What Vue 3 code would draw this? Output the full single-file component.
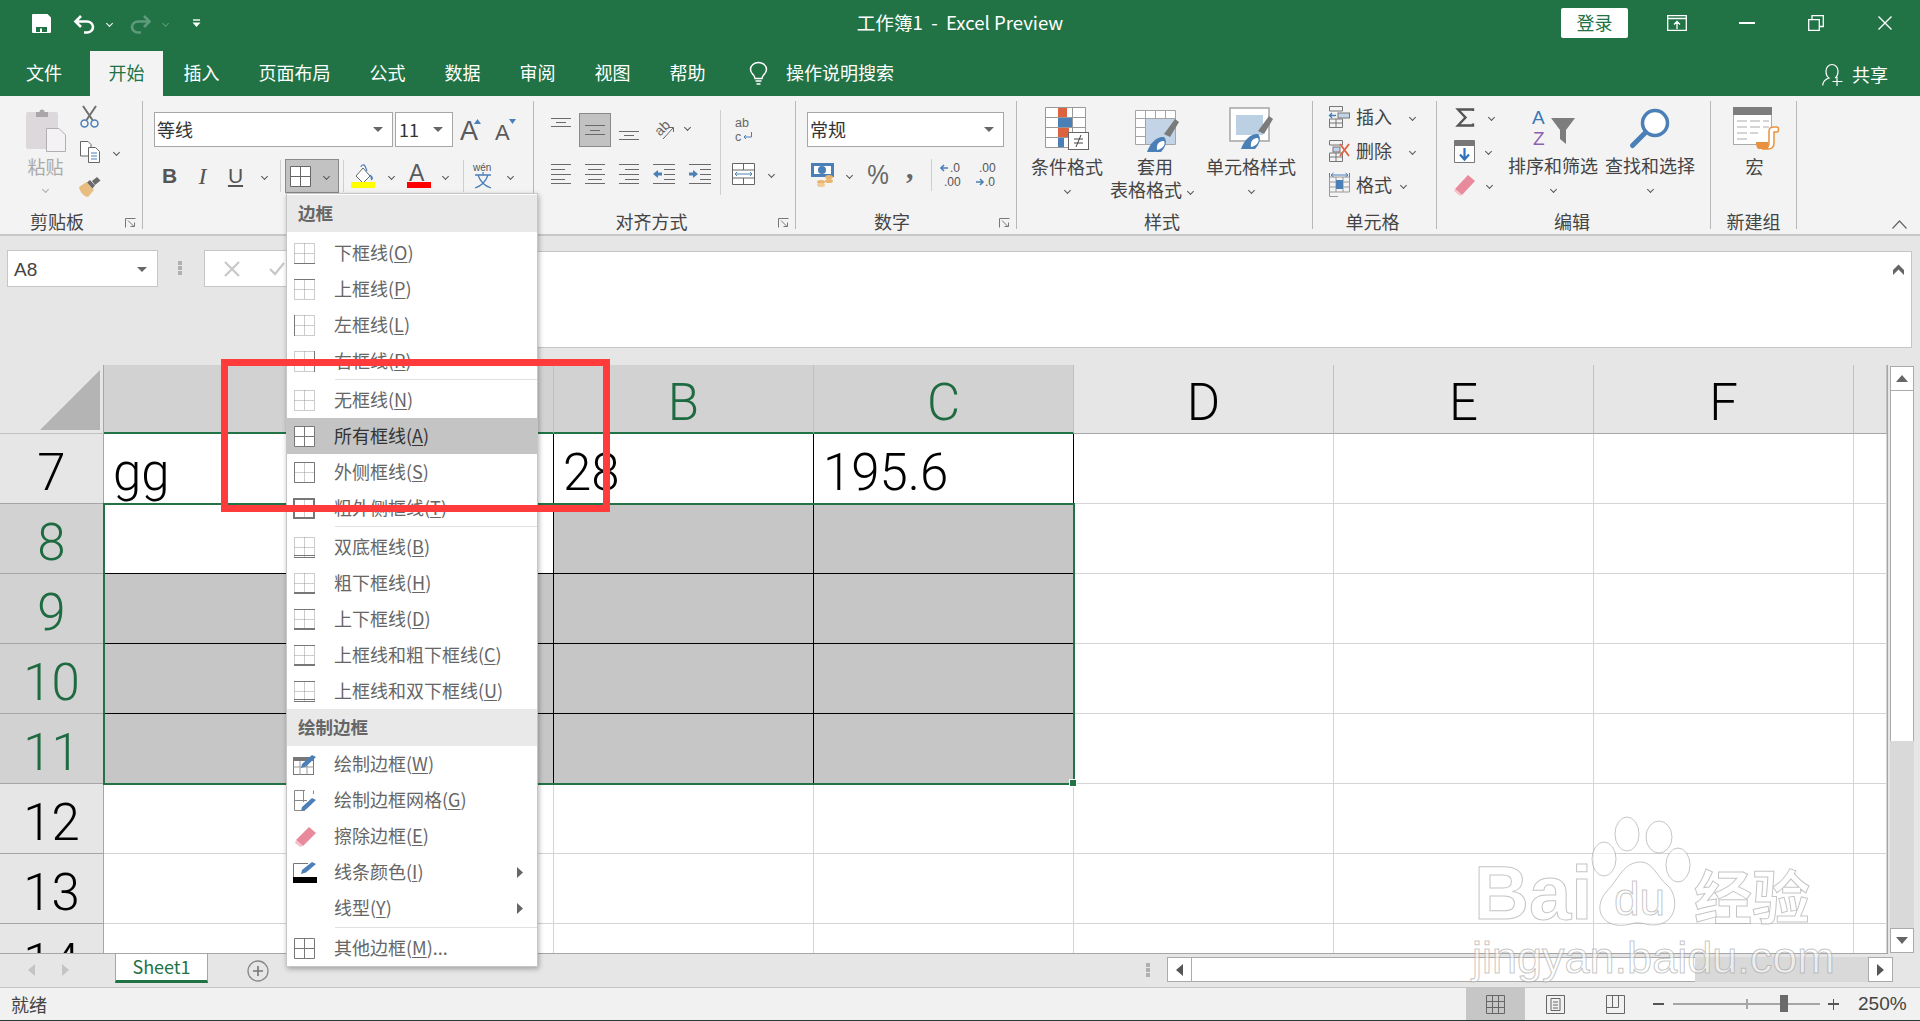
<template>
  <div class="app">
    <!-- title bar -->
    <div class="titlebar">
      <div class="qat">
        <svg class="save" viewBox="0 0 19 19"><path fill="#fff" fill-rule="evenodd" d="M1 0H15.5L19 3.5V18a1 1 0 0 1-1 1H1a1 1 0 0 1-1-1V1a1 1 0 0 1 1-1ZM4 13V18H8V14.5H10V18H15V13Z" /></svg>
        <svg class="undo" viewBox="0 0 23 19"><path d="M8 2 2.5 7.5 8 13M3 7.5H14a6 5.5 0 0 1 0 11H11" fill="none" stroke="#fff" stroke-width="2.6" /></svg>
        <span class="chev light c1"></span>
        <svg class="undo redo" viewBox="0 0 23 19"><path d="M15 2 20.5 7.5 15 13M20 7.5H9a6 5.5 0 0 0 0 11H12" fill="none" stroke="#5e9a7c" stroke-width="2.6" /></svg>
        <span class="chev light dim c2"></span>
        <svg class="cust" viewBox="0 0 9 9"><path d="M1 1H8" stroke="#fff" stroke-width="1.4" /><path d="M0.5 3.5H8.5L4.5 8Z" fill="#fff" /></svg>
      </div>
      <div class="doc-title">工作簿1&nbsp; -&nbsp; Excel Preview</div>
      <div class="win">
        <button class="login">登录</button>
        <svg class="w1" viewBox="0 0 20 16"><path d="M.7.7H19.3V15.3H.7ZM.7 3.5H19.3M10 14V7M7 9.5 10 6.5 13 9.5" fill="none" stroke="#fff" stroke-width="1.3" /></svg>
        <div class="w-min"></div>
        <svg class="w-res" viewBox="0 0 16 16"><path d="M.7 4.7H11.3V15.3H.7ZM4 4.5V.7H15.3V11.5H11.5" fill="none" stroke="#fff" stroke-width="1.3" /></svg>
        <svg class="w-close" viewBox="0 0 14 14"><path d="M.5.5 13.5 13.5M13.5.5.5 13.5" stroke="#fff" stroke-width="1.4" /></svg>
      </div>
    </div>

    <!-- tabs -->
    <div class="tabs">
      <span v-for="t in tabs" :key="t" class="tab" :class="{ on: t === '开始', file: t === '文件' }">{{ t }}</span>
      <svg class="bulb" viewBox="0 0 19 23"><path d="M6 16.5C6 13 1.5 12 1.5 7.5a8 7 0 0 1 16 0C17.500 12 13 13 13 16.500ZM6.500 19H12.500M7.500 22H11.500" fill="none" stroke="#fff" stroke-width="1.5" /></svg>
      <span class="search">操作说明搜索</span>
      <div class="share">
        <svg viewBox="0 0 21 22"><path d="M.7 21.500C1 16.500 4 15 7 14 4.500 12.500 4 9.500 4 7a6 6.500 0 0 1 12 0C16 9.500 15.500 12.500 13 14M15 13V22M10.500 17.500H20.500" fill="none" stroke="#fff" stroke-width="1.2" /></svg>
        <span>共享</span>
      </div>
    </div>

    <!-- ribbon -->
    <div class="ribbon">
      <section class="group" style="width: 143px">
        <div class="body clip">
          <div class="paste">
            <svg viewBox="0 0 40 45"><rect x="0" y="5" width="32" height="37" rx="2" fill="#dcd8dc" /><path d="M10 5h3.500a2.500 2.500 0 0 1 5 0H22v5H10Z" fill="#a9a6a9" /><path d="M20.500 21.500H33L39.500 28V44.500H20.500Z" fill="#f5f2f6" stroke="#b0aeb0" /></svg>
            <span class="muted">粘贴</span>
            <span class="chev faint"></span>
          </div>
          <div class="clip-tools">
            <svg class="scissors" viewBox="0 0 19 22"><path d="M3 0 12.500 14M16 0 6.500 14" stroke="#6f6f6f" stroke-width="2" /><circle cx="4.500" cy="17.500" r="3.500" fill="none" stroke="#4a7fb8" stroke-width="1.500" /><circle cx="14.500" cy="17.500" r="3.500" fill="none" stroke="#4a7fb8" stroke-width="1.500" /></svg>
            <div class="copy">
              <svg viewBox="0 0 20 22"><path d="M.5.5H8L11 3.500V15H.5Z" fill="#fff" stroke="#666" /><path d="M8.500 6.500H15.500L19.500 10.500V21.500H8.500Z" fill="#fff" stroke="#666" /><path d="M11 12H17M11 15H17M11 18H17" stroke="#4a7fb8" /></svg>
              <span class="chev"></span>
            </div>
            <svg class="brush" viewBox="0 0 23 20"><path d="M1 10 8.500 5 16 13 10 20C7 20 2 16 1 10Z" fill="#e7bd80" /><path d="M9 5.500 12 3 17 8.500 14.500 11.500ZM14 4 19 0 22.500 3.500 17 8Z" fill="#6b6b6b" /></svg>
          </div>
        </div>
        <div class="glabel gl-clip">剪贴板</div>
        <svg class="launch" viewBox="0 0 11 10"><path d="M.5 9.500V.5H10.500M3 2.500 9 8.500M5.500 8.500H9.500V4.500" fill="none" stroke="#777" /></svg>
      </section>

      <section class="group" style="width: 391px">
        <div class="body font-g">
          <div class="row1">
            <div class="combo fname"><span class="ctext">等线</span><span class="tri"></span></div>
            <div class="combo fsize"><span class="ctext">11</span><span class="tri"></span></div>
            <svg class="grow" viewBox="0 0 22 24"><text x="0" y="22" class="ico-a" font-size="27">A</text><path d="M14 6 17.500 1 21 6Z" fill="#4a7fb8" /></svg>
            <svg class="shrink" viewBox="0 0 22 24"><text x="0" y="22" class="ico-a" font-size="22">A</text><path d="M14 1H21L17.500 6Z" fill="#4a7fb8" /></svg>
          </div>
          <div class="row2">
            <span class="bi b">B</span>
            <span class="bi i">I</span>
            <span class="bi u">U</span>
            <span class="cw bw"><span class="chev"></span></span>
            <span class="vs"></span>
            <div class="border-btn">
              <svg viewBox="0 0 21 21"><path d="M.5.5H20.500V20.500H.5ZM10.500.5V20.500M.5 10.500H20.500" fill="#fff" stroke="#666" /></svg>
              <span class="chev"></span>
            </div>
            <span class="vs"></span>
            <div class="color-tool fill">
              <svg viewBox="0 0 24 24"><path d="M5 12 12 4 19 12 12 19Z" fill="#fff" stroke="#666" /><path d="M10 3C10 1 13 0 14 2L16 7" fill="none" stroke="#4a7fb8" stroke-width="1.200" /><path d="M19 11C22 12 22 16 20 16" fill="#4a7fb8" stroke="#4a7fb8" /><rect x="0" y="18" width="24" height="6" fill="#ff0" /></svg>
            </div>
            <span class="cw c2w"><span class="chev"></span></span>
            <div class="color-tool">
              <svg viewBox="0 0 24 24"><text x="2" y="17" class="ico-a" font-size="23">A</text><rect x="0" y="18" width="24" height="6" fill="#f00" /></svg>
            </div>
            <span class="cw c3w"><span class="chev"></span></span>
            <span class="vs"></span>
            <svg class="wen" viewBox="0 0 20 26"><text x="0" y="8" font-size="10" fill="#555" font-family="Liberation Sans, sans-serif">wén</text><path d="M10 9V11.500M2 12H18M5 12C7 18 12 23 18 25M15 12C13 18 8 23 2 25" fill="none" stroke="#4a7fb8" stroke-width="1.300" /></svg>
            <span class="cw c4w"><span class="chev"></span></span>
          </div>
        </div>
      </section>

      <section class="group" style="width: 262px">
        <div class="body align-g">
          <div class="align-left">
            <div class="a-row first">
              <svg class="al" viewBox="0 0 20 34"><path d="M0 5.500H20M5 9.500H15M0 13.500H20" stroke="#6a6a6a" /></svg>
              <div class="al-on"><svg class="al" viewBox="0 0 20 34"><path d="M0 12.500H20M5 17.500H15M0 21.500H20" stroke="#6a6a6a" /></svg></div>
              <svg class="al" viewBox="0 0 20 34"><path d="M0 18.500H20M5 22.500H15M0 26.500H20" stroke="#6a6a6a" /></svg>
              <svg class="orient" viewBox="0 0 21 34"><text x="1" y="20" font-size="14" fill="#666" font-family="Liberation Sans, sans-serif" transform="rotate(-45 8 16)">ab</text><path d="M9 26 19 15M15 14.500H19.500V19" fill="none" stroke="#666" /></svg>
              <span class="cw o"><span class="chev"></span></span>
            </div>
            <div class="a-row second">
              <svg class="al2" viewBox="0 0 20 22"><path d="M0 1.500H20M0 6.500H14M0 11.500H20M0 16.500H14M0 20.500H20" stroke="#6a6a6a" /></svg>
              <svg class="al2" viewBox="0 0 20 22"><path d="M0 1.500H20M3 6.500H17M0 11.500H20M3 16.500H17M0 20.500H20" stroke="#6a6a6a" /></svg>
              <svg class="al2" viewBox="0 0 20 22"><path d="M0 1.500H20M6 6.500H20M0 11.500H20M6 16.500H20M0 20.500H20" stroke="#6a6a6a" /></svg>
              <svg class="al2 ind" viewBox="0 0 22 22"><path d="M0 1.500H22M11 6.500H22M11 11.500H22M11 16.500H22M0 20.500H22" stroke="#6a6a6a" /><path d="M0 11 5 7V9.500H9V12.500H5V15Z" fill="#4a7fb8" /></svg>
              <svg class="al2 ind" viewBox="0 0 22 22"><path d="M0 1.500H22M11 6.500H22M11 11.500H22M11 16.500H22M0 20.500H22" stroke="#6a6a6a" /><path d="M9 11 4 7V9.500H0V12.500H4V15Z" fill="#4a7fb8" /></svg>
            </div>
          </div>
          <span class="tall-sep"></span>
          <div class="align-right">
            <svg class="wrap" viewBox="0 0 18 24"><text x="0" y="10" font-size="12.500" fill="#666" font-family="Liberation Sans, sans-serif">ab</text><text x="0" y="24" font-size="12.500" fill="#666" font-family="Liberation Sans, sans-serif">c</text><path d="M16.500 15V20H9M11 18 9 20 11 22" fill="none" stroke="#4a7fb8" /></svg>
            <div class="merge">
              <svg viewBox="0 0 23 22"><path d="M.5.5H22.500V21.500H.5ZM.5 7H22.500M.5 15H22.500M11.500.5V7M11.500 15V21.500" fill="#fff" stroke="#666" /><path d="M3 11H20M5 9 3 11 5 13M18 9 20 11 18 13" fill="none" stroke="#4a7fb8" /></svg>
              <span class="chev"></span>
            </div>
          </div>
        </div>
        <div class="glabel gl-align">对齐方式</div>
        <svg class="launch" viewBox="0 0 11 10"><path d="M.5 9.500V.5H10.500M3 2.500 9 8.500M5.500 8.500H9.500V4.500" fill="none" stroke="#777" /></svg>
      </section>

      <section class="group" style="width: 221px">
        <div class="body num-g">
          <div class="combo nfmt"><span class="ctext">常规</span><span class="tri"></span></div>
          <div class="num-row">
            <svg class="cur" viewBox="0 0 23 24"><rect width="23" height="14" fill="#4a7fb8" /><rect x="3" y="3" width="17" height="8" fill="#fff" /><circle cx="11" cy="7" r="4" fill="#4a7fb8" /><ellipse cx="18" cy="14" rx="4" ry="2" fill="#e8b46e" /><ellipse cx="18" cy="18" rx="4" ry="2" fill="#e8b46e" /><ellipse cx="10" cy="19" rx="4" ry="2" fill="#e8b46e" /><ellipse cx="10" cy="22" rx="4" ry="2" fill="#f1cc99" /></svg>
            <span class="cw cc"><span class="chev"></span></span>
            <span class="pct">%</span>
            <span class="comma">,</span>
            <span class="vs ns"></span>
            <svg class="dec" viewBox="0 0 22 28"><text x="9" y="11" class="dtx">.0</text><text x="3" y="25" class="dtx">.00</text><path d="M0 7H7M3 4 0 7 3 10" fill="none" stroke="#4a7fb8" stroke-width="1.600" /></svg>
            <svg class="dec d2" viewBox="0 0 22 28"><text x="3" y="11" class="dtx">.00</text><text x="9" y="25" class="dtx">.0</text><path d="M0 21H7M4 18 7 21 4 24" fill="none" stroke="#4a7fb8" stroke-width="1.600" /></svg>
          </div>
        </div>
        <div class="glabel gl-num">数字</div>
        <svg class="launch" viewBox="0 0 11 10"><path d="M.5 9.500V.5H10.500M3 2.500 9 8.500M5.500 8.500H9.500V4.500" fill="none" stroke="#777" /></svg>
      </section>

      <section class="group" style="width: 296px">
        <div class="body style-g">
          <div class="big s1">
            <svg viewBox="0 0 44 43"><path d="M.5.5H40.500V40.500H.5ZM.5 10.500H40.500M.5 20.500H40.500M.5 30.500H40.500M13.500.5V40.500M27.500.5V40.500" fill="#fff" stroke="#999" /><rect x="13" y="1" width="9" height="9" fill="#dd6340" /><rect x="13" y="11" width="14" height="9" fill="#4a7fb8" /><rect x="13" y="21" width="11" height="9" fill="#dd6340" /><rect x="13" y="31" width="6" height="9" fill="#4a7fb8" /><rect x="23.500" y="25.500" width="20" height="17" fill="#fff" stroke="#666" /><path d="M29 32H38M29 36H38M36 28 31 40" stroke="#444" fill="none" /></svg>
            <span>条件格式</span>
            <span class="chev"></span>
          </div>
          <div class="big s2">
            <svg viewBox="0 0 44 42"><path d="M.5.5H40.500V34.500H.5ZM.5 8.500H40.500M.5 17.500H40.500M.5 26.500H40.500M10.500.5V34.500M20.500.5V34.500M30.500.5V34.500" fill="#fff" stroke="#a5a5a5" /><rect x="11" y="9" width="29" height="25" fill="#c2d4e6" /><path d="M29 24 40 9 44 12 35 27Z" fill="#7b7b7b" /><path d="M12 42C15 33 22 26 29 27 33 31 30 38 26 42Z" fill="#4a7fb8" /><path d="M22 40C21 33 25 31 29 31 31 34 28 39 22 40Z" fill="#fff" /></svg>
            <span>套用</span>
            <span class="s2-line">表格格式<span class="chev"></span></span>
          </div>
          <div class="big s3">
            <svg viewBox="0 0 44 42"><path d="M1 1H40V34H1Z" fill="#fff" stroke="#a5a5a5" stroke-width="1.500" /><rect x="7" y="8" width="27" height="20" fill="#bcd0e4" /><path d="M29 24 40 9 44 12 35 27Z" fill="#7b7b7b" /><path d="M12 42C15 33 22 26 29 27 33 31 30 38 26 42Z" fill="#4a7fb8" /><path d="M22 40C21 33 25 31 29 31 31 34 28 39 22 40Z" fill="#fff" /></svg>
            <span>单元格样式</span>
            <span class="chev"></span>
          </div>
        </div>
        <div class="glabel gl-st">样式</div>
      </section>

      <section class="group" style="width: 124px">
        <div class="body cell-g">
          <div class="cell-row">
            <svg viewBox="0 0 21 22"><path d="M.5.5H13.500V5H.5ZM.5 13H13.500V21.500H.5ZM7 13V21.500M.5 17H13.500" fill="none" stroke="#777" /><rect x="9" y="7" width="11.500" height="5" fill="#c2d4e6" stroke="#777" /><path d="M.5 9.500H7M3 7 .5 9.500 3 12" fill="none" stroke="#4a7fb8" stroke-width="1.300" /></svg>
            <span class="ct">插入</span><span class="chev ce"></span>
          </div>
          <div class="cell-row">
            <svg viewBox="0 0 21 22"><path d="M.5.5H13.500V5H.5ZM.5 13H13.500V21.500H.5ZM7 13V21.500M.5 17H13.500" fill="none" stroke="#777" /><rect x="4" y="7" width="7" height="5" fill="#c2d4e6" stroke="#777" /><path d="M11 4 20 16M20 4 11 16" stroke="#dd6340" stroke-width="1.800" /></svg>
            <span class="ct">删除</span><span class="chev ce"></span>
          </div>
          <div class="cell-row">
            <svg class="fm" viewBox="0 0 21 24"><path d="M.5 4H20.500V19H.5ZM.5 19V23.500H9M7 4V19M14 4V19M.5 9H20.500M.5 14H20.500" fill="none" stroke="#999" /><rect x="7" y="7" width="7" height="9" fill="#4a7fb8" /><path d="M.5 0V4M20.500 0V4M2 2H19M4.500 0 2 2 4.500 4M16.500 0 19 2 16.500 4" fill="none" stroke="#4a7fb8" /></svg>
            <span class="ct">格式</span><span class="chev cf"></span>
          </div>
        </div>
        <div class="glabel gl-cell">单元格</div>
      </section>

      <section class="group" style="width: 274px">
        <div class="body edit-g">
          <div class="edit-col">
            <div class="e-row">
              <svg class="sig" viewBox="0 0 18 19"><path d="M17 3V1.500H2L9.500 9.500 2 17.500H17V15.500" fill="none" stroke="#555" stroke-width="2.400" /></svg>
              <span class="chev e1"></span>
            </div>
            <div class="e-row">
              <svg class="fil" viewBox="0 0 21 23"><path d="M.5.5H20.500V22.500H.5Z" fill="#fff" stroke="#777" /><rect x="1" y="1" width="19" height="5" fill="#777" /><path d="M10.500 8V19M6 14.500 10.500 19.500 15 14.500" fill="none" stroke="#2d72b8" stroke-width="2.200" /></svg>
              <span class="chev e2"></span>
            </div>
            <div class="e-row">
              <svg class="era" viewBox="0 0 22 21"><path d="M1 14 14 0 21 6 8 20Z" fill="#e8899c" /><path d="M1 14 8 20 6 21 0 16Z" fill="#f4c2cc" /></svg>
              <span class="chev e2"></span>
            </div>
          </div>
          <div class="big sort">
            <svg viewBox="0 0 43 39"><text x="0" y="17" font-size="19" fill="#3a78b8" font-family="Liberation Sans, sans-serif">A</text><text x="1" y="38" font-size="19" fill="#8e5fb0" font-family="Liberation Sans, sans-serif">Z</text><path d="M19 11H43L34 23V37L28 32V23Z" fill="#7d7d7d" /></svg>
            <span>排序和筛选</span>
            <span class="chev"></span>
          </div>
          <div class="big find">
            <svg viewBox="0 0 40 40"><circle cx="25" cy="15" r="12.500" fill="#fff" stroke="#4a7fb8" stroke-width="3.500" /><path d="M15.500 24.500 2.500 37.500" stroke="#4a7fb8" stroke-width="5" stroke-linecap="round" /></svg>
            <span>查找和选择</span>
            <span class="chev"></span>
          </div>
        </div>
        <div class="glabel gl-edit">编辑</div>
      </section>

      <section class="group" style="width: 86px">
        <div class="body macro-g">
          <svg viewBox="0 0 46 42"><rect x=".5" y=".5" width="38" height="37" fill="#fff" stroke="#aaa" /><rect width="39" height="8" fill="#7d7d7d" /><path d="M4 14H14M17 14H27M30 14H36M4 20H14M17 20H27M30 20H36M4 26H14M17 26H25M4 32H14" stroke="#aaa" /><path d="M29 42C36 42 36 38 36 34V24C36 21 38 20 41 20H44C46 20 46 25 44 25H41V36C41 40 39 42 35 42Z" fill="#fff" stroke="#e8923f" stroke-width="1.500" /><path d="M23 35H35V42H26C23 42 23 35 23 35Z" fill="#e8923f" /></svg>
          <span>宏</span>
        </div>
        <div class="glabel">新建组</div>
      </section>

      <svg class="collapse" viewBox="0 0 15 9"><path d="M.5 8.500 7.500 1 14.500 8.500" fill="none" stroke="#666" stroke-width="1.200" /></svg>
    </div>

    <!-- formula bar -->
    <div class="formula">
      <div class="namebox"><span>A8</span><span class="tri"></span></div>
      <span class="dots"></span>
      <div class="fx">
        <svg viewBox="0 0 16 16"><path d="M1 1 15 15M15 1 1 15" stroke="#c8c8c8" stroke-width="2.200" /></svg>
        <svg class="ok" viewBox="0 0 16 16"><path d="M1 8 6 13 15 2" fill="none" stroke="#c8c8c8" stroke-width="2.200" /></svg>
      </div>
      <div class="fbar">
        <svg viewBox="0 0 11 11"><path d="M0 6 5.500 .5 11 6V11L5.500 5.500 0 11Z" fill="#666" /></svg>
      </div>
    </div>

    <!-- sheet -->
    <div class="sheet-wrap">
      <div class="sheet">
        <div class="corner"><svg viewBox="0 0 60 60"><path d="M60 0V60H0Z" fill="#b4b4b4" /></svg></div>
        <div v-for="(c, i) in cols" :key="i" class="colhead" :class="{ sel: i < 3 }">{{ c }}</div>
        <template v-for="r in rows" :key="r">
          <div class="rowhead" :class="{ sel: r >= 8 && r <= 11 }">{{ r }}</div>
          <div v-for="(c, i) in cols" :key="i" class="cell" :class="cellClass(r, i)">{{ cellText(r, i) }}</div>
        </template>
        <div class="selection"><span class="handle"></span></div>
      </div>
      <div class="vscroll">
        <div class="sbtn"><svg viewBox="0 0 12 7"><path d="M0 7 6 0 12 7Z" fill="#666" /></svg></div>
        <div class="sthumb"></div>
        <div class="strack"></div>
        <div class="sbtn"><svg viewBox="0 0 12 7"><path d="M0 0H12L6 7Z" fill="#666" /></svg></div>
      </div>
    </div>

    <!-- sheet tabs -->
    <div class="sheetbar">
      <div class="nav">
        <svg viewBox="0 0 7 12"><path d="M7 0V12L0 6Z" fill="#c4c4c4" /></svg>
        <svg viewBox="0 0 7 12"><path d="M0 0V12L7 6Z" fill="#c4c4c4" /></svg>
      </div>
      <div class="stab">Sheet1</div>
      <svg class="add" viewBox="0 0 22 22"><circle cx="11" cy="11" r="10" fill="none" stroke="#888" stroke-width="1.300" /><path d="M6 11H16M11 6V16" stroke="#777" stroke-width="1.600" /></svg>
      <span class="dots hd"></span>
      <div class="hscroll">
        <div class="hbtn"><svg viewBox="0 0 7 12"><path d="M7 0V12L0 6Z" fill="#555" /></svg></div>
        <div class="hthumb"></div>
        <div class="htrack"></div>
        <div class="hbtn"><svg viewBox="0 0 7 12"><path d="M0 0V12L7 6Z" fill="#555" /></svg></div>
      </div>
    </div>

    <!-- status bar -->
    <div class="status">
      <span class="ready">就绪</span>
      <div class="viewbtn on"><svg viewBox="0 0 19 19"><path d="M.5.5H18.500V18.500H.5ZM.5 6.500H18.500M.5 12.500H18.500M6.500.5V18.500M12.500.5V18.500" fill="none" stroke="#666" /></svg></div>
      <div class="viewbtn"><svg viewBox="0 0 19 19"><path d="M.5.5H18.500V18.500H.5ZM5 3.500H14V15.500H5ZM7 7H12M7 10H12M7 13H12" fill="none" stroke="#666" /></svg></div>
      <div class="viewbtn"><svg viewBox="0 0 19 19"><path d="M.5.5H18.500V18.500H.5ZM.5 12.500H12.500V.5M6.500.5V12.500" fill="none" stroke="#666" /></svg></div>
      <span class="zm minus"></span>
      <div class="slider"><span class="tick"></span><span class="knob"></span></div>
      <span class="zm plus"></span>
      <span class="pctz">250%</span>
    </div>

    <!-- borders dropdown -->
    <div class="menu">
      <template v-for="(m, i) in menu" :key="i">
        <div v-if="m.head" class="mhead" :class="{ gap: i === 0 }">{{ m.head }}</div>
        <div v-else-if="m.sep" class="msep" :class="{ last: m.sep === 2 }"></div>
        <div v-else class="mitem" :class="{ hover: m.hover }">
          <svg v-if="m.kind === 'draw'" class="mico" viewBox="0 0 24 21"><rect x=".5" y="3.500" width="20" height="17" fill="#fff" stroke="#777" /><rect y="3" width="21" height="4" fill="#777" /><path d="M.5 13H20.500M7 7V20.500M14 7V20.500" stroke="#999" /><path d="M8 14 9 10 19 1 23 3 13 12.500Z" fill="#4a7fb8" /></svg>
          <svg v-else-if="m.kind === 'grid'" class="mico" viewBox="0 0 24 21"><path d="M12 .5H1.500V20.500H12M1.500 10.500H14M10.500.5V12M20.500.5V4" fill="none" stroke="#888" /><path d="M8 21 9 17 19 8 23 10 13 19.500Z" fill="#4a7fb8" /></svg>
          <svg v-else-if="m.kind === 'erase'" class="mico" viewBox="0 0 24 21"><path d="M3 14 16 1 23 7 10 20Z" fill="#e8899c" /><path d="M3 14 10 20 7 21 2 17Z" fill="#f4c2cc" /></svg>
          <svg v-else-if="m.kind === 'color'" class="mico" viewBox="0 0 24 21"><path d="M.5 15V1.500H15" fill="none" stroke="#777" /><path d="M8 12 9 8 19 0 23 2 13 10.500Z" fill="#4a7fb8" /><rect y="15" width="24" height="6" fill="#000" /></svg>
          <svg v-else-if="m.kind !== 'none'" class="mico" viewBox="0 0 24 21">
            <g transform="translate(1 0)">
              <path v-if="m.hover || m.full" d="M.5.5H20.500V20.500H.5Z" :fill="m.hover ? '#fff' : 'none'" />
              <path v-else d="M.5.5H20.500V20.500H.5ZM10.500.5V20.500M.5 10.500H20.500" class="dotted" />
              <path v-if="m.solid" :d="m.solid" class="line" />
              <path v-if="m.thick" :d="m.thick" class="line thick" />
            </g>
          </svg>
          <span v-else class="mico"></span>
          <span class="mtext">{{ m.t }}(<u>{{ m.k }}</u>){{ m.tail }}</span>
          <svg v-if="m.more" class="marrow" viewBox="0 0 6 11"><path d="M0 0 6 5.500 0 11Z" fill="#666" /></svg>
        </div>
      </template>
    </div>

    <!-- red annotation box -->
    <div class="redbox"></div>

    <!-- watermark -->
    <div class="wm">
      <span class="wm-bai">Bai</span>
      <svg class="wm-paw" viewBox="0 0 100 110">
        <g fill="rgba(255,255,255,.55)" stroke="rgba(150,150,150,.55)" stroke-width="1">
          <ellipse cx="36" cy="17" rx="12" ry="17" />
          <ellipse cx="68" cy="20" rx="13" ry="16" />
          <ellipse cx="13" cy="42" rx="12" ry="17" />
          <ellipse cx="87" cy="48" rx="12" ry="17" />
          <path d="M50 45C62 45 66 60 76 68 88 78 88 108 62 108 55 108 48 104 40 107 12 114 0 92 16 74 28 62 32 45 50 45Z" />
        </g>
      </svg>
      <span class="wm-du">du</span>
      <span class="wm-cn">经验</span>
      <span class="wm-url">jingyan.baidu.com</span>
    </div>
  </div>
</template>

<script setup>
const tabs = ['文件', '开始', '插入', '页面布局', '公式', '数据', '审阅', '视图', '帮助'];
const cols = ['', 'B', 'C', 'D', 'E', 'F', ''];
const rows = [7, 8, 9, 10, 11, 12, 13, 14];

const allLines = 'M.5.5H20.500V20.500H.5ZM10.500.5V20.500M.5 10.500H20.500';

const menu = [
  { head: '边框' },
  { t: '下框线', k: 'O', solid: 'M0 20.500H21' },
  { t: '上框线', k: 'P', solid: 'M0 .5H21' },
  { t: '左框线', k: 'L', solid: 'M.5 0V21' },
  { t: '右框线', k: 'R', solid: 'M20.500 0V21' },
  { sep: 1 },
  { t: '无框线', k: 'N' },
  { t: '所有框线', k: 'A', hover: true, solid: allLines },
  { t: '外侧框线', k: 'S', solid: 'M.5.5H20.500V20.500H.5Z' },
  { t: '粗外侧框线', k: 'T', thick: 'M0 1H20V20H0Z' },
  { sep: 1 },
  { t: '双底框线', k: 'B', solid: 'M0 18.500H21M0 20.500H21' },
  { t: '粗下框线', k: 'H', thick: 'M0 20H21' },
  { t: '上下框线', k: 'D', solid: 'M0 .5H21', thick: 'M0 20H21' },
  { t: '上框线和粗下框线', k: 'C', solid: 'M0 .5H21', thick: 'M0 20H21' },
  { t: '上框线和双下框线', k: 'U', solid: 'M0 .5H21M0 18.500H21M0 20.500H21' },
  { head: '绘制边框' },
  { t: '绘制边框', k: 'W', kind: 'draw' },
  { t: '绘制边框网格', k: 'G', kind: 'grid' },
  { t: '擦除边框', k: 'E', kind: 'erase' },
  { t: '线条颜色', k: 'I', kind: 'color', more: true },
  { t: '线型', k: 'Y', kind: 'none', more: true },
  { sep: 2 },
  { t: '其他边框', k: 'M', tail: '...', full: true, solid: allLines },
];

function cellClass(r, i) {
  const inRange = i < 3 && r >= 8 && r <= 11;
  return {
    shade: inRange && !(r === 8 && i === 0),
    vline: i < 3 && r <= 11,
    hline: inRange && r < 11,
  };
}

function cellText(r, i) {
  if (r !== 7) return '';
  return ['gg', '28', '195.6'][i] || '';
}
</script>

<style>
html,
body {
  margin: 0;
  background: #e6e6e6;
}
</style>

<style scoped>
.app {
  position: relative;
  width: 1920px;
  height: 1021px;
  overflow: hidden;
  display: flex;
  flex-direction: column;
  font-family: "Noto Sans CJK SC", "Liberation Sans", sans-serif;
  font-size: 18px;
  color: #444;
  background: #e6e6e6;
}
svg {
  display: block;
  flex: none;
  overflow: visible;
}

/* title bar */
.titlebar {
  height: 51px;
  padding-bottom: 5px;
  box-sizing: border-box;
  background: #217346;
  color: #fff;
  display: grid;
  grid-template-columns: 1fr auto 1fr;
  align-items: center;
}
.qat {
  display: flex;
  align-items: center;
  padding-left: 32px;
}
.save {
  width: 19px;
  height: 19px;
}
.undo {
  width: 23px;
  height: 19px;
  margin-left: 22px;
}
.redo {
  margin-left: 17px;
}
.c1 {
  margin-left: 11px;
}
.c2 {
  margin-left: 11px;
}
.cust {
  width: 9px;
  height: 9px;
  margin-left: 24px;
}
.doc-title {
  font-size: 18.6px;
  line-height: 24px;
  margin-top: -2px;
}
.win {
  display: flex;
  align-items: center;
  justify-content: flex-end;
  padding-right: 28px;
}
.login {
  width: 67px;
  height: 30px;
  border: 0;
  border-radius: 2px;
  padding: 0 0 2px;
  background: #fff;
  color: #217346;
  font: 18px "Noto Sans CJK SC", sans-serif;
}
.w1 {
  width: 20px;
  height: 16px;
  margin-left: 39px;
}
.w-min {
  width: 16px;
  height: 2px;
  margin-left: 52px;
  background: #fff;
}
.w-res {
  width: 16px;
  height: 16px;
  margin-left: 53px;
}
.w-close {
  width: 14px;
  height: 14px;
  margin-left: 54px;
}

/* tabs */
.tabs {
  height: 45px;
  background: #217346;
  color: #fff;
  display: flex;
  align-items: stretch;
  padding-left: 7.5px;
  gap: 2px;
}
.tab {
  padding: 0 18.5px;
  line-height: 42px;
}
.tab.file {
  margin-right: 7.5px;
}
.tab.on {
  background: #f3f3f3;
  color: #217346;
}
.bulb {
  width: 19px;
  height: 23px;
  align-self: center;
  margin-left: 23px;
}
.search {
  margin-left: 16px;
  line-height: 42px;
}
.share {
  margin-left: auto;
  padding-right: 32px;
  display: flex;
  align-items: center;
  gap: 9px;
  line-height: 42px;
}
.share svg {
  width: 21px;
  height: 22px;
  margin-top: 3px;
}

/* ribbon */
.ribbon {
  position: relative;
  height: 140px;
  box-sizing: border-box;
  padding-top: 5px;
  background: #f3f3f3;
  border-bottom: 2px solid #c8c8c8;
  display: flex;
  align-items: flex-start;
}
.group {
  position: relative;
  height: 128px;
  box-sizing: border-box;
  border-right: 1px solid #b8b8b8;
  display: flex;
  flex-direction: column;
}
.body {
  height: 108px;
}
.glabel {
  height: 20px;
  line-height: 24px;
  text-align: center;
  font-size: 18px;
}
.gl-clip {
  padding-right: 28px;
}
.gl-align {
  padding-right: 26px;
}
.gl-num {
  padding-right: 28px;
}
.gl-st {
  padding-right: 5px;
}
.gl-cell {
  padding-right: 4px;
}
.gl-edit {
  padding-right: 3px;
}
.launch {
  position: absolute;
  right: 6px;
  bottom: 1px;
  width: 11px;
  height: 10px;
}
.chev {
  display: inline-block;
  flex: none;
  width: 5px;
  height: 5px;
  box-sizing: border-box;
  border-right: 1.4px solid #555;
  border-bottom: 1.4px solid #555;
  transform: rotate(45deg);
}
.chev.light {
  border-color: #fff;
}
.chev.dim {
  border-color: #5e9a7c;
}
.chev.faint {
  border-color: #aaa;
}
.cw {
  width: 22px;
  display: flex;
  justify-content: center;
}
.tri {
  display: block;
  flex: none;
  width: 0;
  height: 0;
  border-left: 5px solid transparent;
  border-right: 5px solid transparent;
  border-top: 5px solid #666;
}

/* clipboard */
.clip {
  display: flex;
  padding-left: 24px;
}
.paste {
  width: 43px;
  display: flex;
  flex-direction: column;
  align-items: center;
  padding-top: 6px;
}
.paste svg {
  width: 40px;
  height: 45px;
}
.muted {
  color: #aaa;
  line-height: 26px;
  margin-top: 1px;
}
.paste .chev {
  margin-top: 8px;
}
.clip-tools {
  margin-left: 13px;
  padding-top: 5px;
}
.scissors {
  width: 19px;
  height: 22px;
}
.copy {
  display: flex;
  align-items: center;
  gap: 14px;
  margin-top: 13px;
}
.copy svg {
  width: 20px;
  height: 22px;
}
.brush {
  width: 23px;
  height: 20px;
  margin-top: 14px;
  margin-left: -2px;
}

/* font group */
.font-g {
  padding-top: 11px;
}
.row1 {
  display: flex;
  padding-left: 11px;
  align-items: flex-start;
}
.combo {
  height: 35px;
  box-sizing: border-box;
  background: #fff;
  border: 1px solid #a6a6a6;
  display: flex;
  align-items: center;
  justify-content: space-between;
  padding: 0 9px 0 2px;
  font-size: 18px;
  color: #333;
}
.ctext {
  line-height: 26px;
  margin-top: -2px;
}
.fname {
  width: 239px;
}
.fsize {
  width: 58px;
  margin-left: 2px;
  padding-left: 3px;
}
.grow {
  width: 22px;
  height: 24px;
  margin: 6px 0 0 7px;
}
.shrink {
  width: 22px;
  height: 24px;
  margin: 6px 0 0 13px;
}
.ico-a {
  font-family: "Liberation Sans", sans-serif;
  fill: #5a5a5a;
}
.row2 {
  display: flex;
  align-items: center;
  padding-left: 10px;
  margin-top: 12px;
  height: 34px;
}
.bi {
  width: 33px;
  text-align: center;
  font: 21px "Liberation Sans", sans-serif;
  color: #555;
}
.b {
  font-weight: bold;
}
.i {
  font-style: italic;
  font-family: "Liberation Serif", serif;
  font-size: 24px;
}
.u {
  text-decoration: underline;
  text-underline-offset: 2px;
}
.bw {
  width: 24px;
}
.vs {
  display: block;
  flex: none;
  width: 1px;
  height: 32px;
  margin: 0 4px 0 4px;
  background: #cfcfcf;
}
.border-btn {
  width: 54px;
  height: 34px;
  box-sizing: border-box;
  background: #c2c2c2;
  border: 1px solid #8a8a8a;
  display: flex;
  align-items: center;
  padding-left: 4px;
  gap: 13px;
}
.border-btn svg {
  width: 21px;
  height: 21px;
}
.color-tool {
  width: 24px;
}
.color-tool svg {
  width: 24px;
  height: 24px;
}
.fill {
  margin-left: 3px;
}
.c2w {
  width: 32px;
}
.c3w {
  width: 28px;
}
.wen {
  width: 20px;
  height: 26px;
  margin-left: 5px;
}
.c4w {
  width: 34px;
}

/* alignment */
.align-g {
  display: flex;
  padding-left: 17px;
}
.align-left {
  width: 169px;
}
.a-row {
  display: flex;
  align-items: center;
}
.first {
  margin-top: 12px;
  height: 34px;
}
.second {
  margin-top: 16px;
  height: 22px;
  gap: 14px;
}
.al {
  width: 20px;
  height: 34px;
}
.al-on {
  width: 32px;
  height: 34px;
  box-sizing: border-box;
  margin: 0 8px;
  padding-left: 5px;
  background: #c2c2c2;
  border: 1px solid #8a8a8a;
}
.al-on .al {
  margin-top: -1px;
}
.al2 {
  width: 20px;
  height: 22px;
}
.al2.ind {
  width: 22px;
}
.orient {
  width: 21px;
  height: 34px;
  margin-left: 15px;
}
.o {
  width: 20px;
  margin-left: 2px;
  margin-top: -6px;
}
.tall-sep {
  display: block;
  flex: none;
  width: 1px;
  height: 85px;
  margin-top: 9px;
  background: #cfcfcf;
}
.align-right {
  padding: 16px 0 0 11px;
}
.wrap {
  width: 18px;
  height: 24px;
  margin-left: 3px;
}
.merge {
  display: flex;
  align-items: center;
  gap: 14px;
  margin-top: 22px;
}
.merge svg {
  width: 23px;
  height: 22px;
}

/* number */
.num-g {
  padding: 11px 0 0 11px;
}
.nfmt {
  width: 197px;
}
.num-row {
  display: flex;
  align-items: center;
  margin-top: 15px;
  padding-left: 4px;
  height: 26px;
}
.cur {
  width: 23px;
  height: 24px;
}
.cc {
  width: 30px;
}
.pct {
  margin-left: 2px;
  width: 26px;
  font: 27px/26px "Liberation Sans", sans-serif;
  color: #666;
  transform: scaleX(0.9);
}
.comma {
  margin-left: 14px;
  font: bold 30px/26px "Liberation Serif", serif;
  color: #666;
  margin-top: -14px;
  width: 10px;
}
.ns {
  margin: 0 9px 0 15px;
}
.dec {
  width: 22px;
  height: 28px;
}
.d2 {
  margin-left: 13px;
}
.dtx {
  font: 12px "Liberation Sans", sans-serif;
  fill: #555;
}

/* big buttons */
.big {
  display: flex;
  flex-direction: column;
  align-items: center;
  line-height: 24px;
}
.big .chev {
  margin-top: 10px;
}
.style-g {
  display: flex;
  padding-left: 14px;
}
.s1 {
  width: 72px;
  padding-top: 6px;
}
.s1 svg {
  width: 44px;
  height: 43px;
  margin-bottom: 4px;
}
.s2 {
  width: 84px;
  margin-left: 7px;
  padding-top: 9px;
  align-items: flex-start;
}
.s2 svg {
  width: 44px;
  height: 42px;
  margin: 0 0 2px 25px;
}
.s2 > span:first-of-type {
  margin-left: 27px;
}
.s2-line {
  margin-top: -1px;
}
.s2-line .chev {
  margin: 0 0 3px 6px;
}
.s3 {
  width: 92px;
  margin-left: 11px;
  padding-top: 6px;
}
.s3 svg {
  width: 44px;
  height: 42px;
  margin-bottom: 5px;
}

/* cells */
.cell-g {
  padding: 4px 0 0 16px;
}
.cell-row {
  display: flex;
  align-items: center;
  height: 24px;
  margin-bottom: 10px;
  line-height: 24px;
}
.ct {
  margin-top: -2px;
}
.cell-row svg {
  width: 21px;
  height: 22px;
  margin-right: 6px;
}
.cell-row svg.fm {
  height: 24px;
}
.ce {
  margin-left: 18px;
}
.cf {
  margin-left: 9px;
}

/* editing */
.edit-g {
  display: flex;
}
.edit-col {
  margin-left: 17px;
  width: 54px;
  padding-top: 5px;
}
.e-row {
  display: flex;
  align-items: center;
  height: 23px;
  margin-bottom: 11px;
}
.sig {
  width: 18px;
  height: 19px;
  margin-left: 2px;
}
.fil {
  width: 21px;
  height: 23px;
}
.era {
  width: 22px;
  height: 21px;
}
.e1 {
  margin-left: 15px;
}
.e2 {
  margin-left: 11px;
}
.sort {
  width: 90px;
  padding-top: 6px;
}
.sort svg {
  width: 43px;
  height: 39px;
  margin-bottom: 7px;
}
.find {
  width: 90px;
  margin-left: 7px;
  padding-top: 7px;
}
.find svg {
  width: 40px;
  height: 40px;
  margin-bottom: 5px;
}
.macro-g {
  display: flex;
  flex-direction: column;
  align-items: center;
  padding: 6px 0 0 4px;
  box-sizing: border-box;
  line-height: 24px;
}
.macro-g svg {
  width: 46px;
  height: 42px;
  margin-bottom: 5px;
}
.macro-g span {
  margin-left: -2px;
}
.collapse {
  position: absolute;
  right: 13px;
  bottom: 5px;
  width: 15px;
  height: 9px;
}

/* formula bar */
.formula {
  height: 129px;
  box-sizing: border-box;
  background: #e6e6e6;
  display: flex;
  align-items: flex-start;
  padding-top: 14px;
  padding-left: 7px;
}
.namebox {
  width: 151px;
  height: 37px;
  box-sizing: border-box;
  background: #fff;
  border: 1px solid #c6c6c6;
  display: flex;
  align-items: center;
  justify-content: space-between;
  padding: 2px 10px 0 6px;
  font: 19px "Liberation Sans", sans-serif;
  color: #444;
}
.dots {
  display: block;
  flex: none;
  width: 4px;
  height: 14px;
  margin: 11px 22px 0 20px;
  background: repeating-linear-gradient(#b0b0b0 0 4px, transparent 4px 5px);
}
.fx {
  width: 110px;
  height: 37px;
  box-sizing: border-box;
  background: #fff;
  border: 1px solid #c6c6c6;
  display: flex;
  align-items: center;
  padding-left: 19px;
  gap: 29px;
}
.fx svg {
  width: 16px;
  height: 16px;
}
.fbar {
  flex: 1;
  margin: 1px 8px 0 -2px;
  height: 97px;
  box-sizing: border-box;
  background: #fff;
  border: 1px solid #c6c6c6;
  display: flex;
  justify-content: flex-end;
  padding: 12px 7px 0 0;
}
.fbar svg {
  width: 11px;
  height: 11px;
}

/* sheet */
.sheet-wrap {
  height: 589px;
  display: flex;
  overflow: hidden;
}
.sheet {
  position: relative;
  width: 1888px;
  height: 589px;
  flex: none;
  box-sizing: border-box;
  background: #fff;
  border-right: 1px solid #a6a6a6;
  border-bottom: 1px solid #a6a6a6;
  overflow: hidden;
  display: grid;
  grid-template-columns: 104px 450px 260px 260px 260px 260px 260px 33px;
  grid-template-rows: 69px repeat(8, 70px);
  font-family: Roboto, "Liberation Sans", sans-serif;
  font-weight: 300;
  font-size: 51px;
  color: #000;
}
.corner {
  background: #e6e6e6;
  border-right: 1px solid #a6a6a6;
  border-bottom: 1px solid #c0c0c0;
  box-sizing: border-box;
  padding: 5px 3px 0 40px;
}
.corner svg {
  width: 60px;
  height: 60px;
}
.colhead {
  background: #e6e6e6;
  border-right: 1px solid #c0c0c0;
  border-bottom: 1px solid #a6a6a6;
  box-sizing: border-box;
  text-align: center;
  line-height: 75px;
}
.colhead.sel {
  background: #d2d2d2;
  color: #1e6b41;
  border-bottom: 2px solid #217346;
}
.rowhead {
  background: #e6e6e6;
  border-right: 1px solid #a6a6a6;
  border-bottom: 1px solid #a6a6a6;
  box-sizing: border-box;
  text-align: center;
  line-height: 77px;
  overflow: hidden;
}
.rowhead.sel {
  background: #d2d2d2;
  color: #1e6b41;
}
.cell {
  border-right: 1px solid #d4d4d4;
  border-bottom: 1px solid #d4d4d4;
  box-sizing: border-box;
  padding-left: 9px;
  line-height: 77px;
  overflow: hidden;
}
.shade {
  background: #c6c6c6;
}
.vline {
  border-right-color: #000;
}
.hline {
  border-bottom-color: #000;
}
.selection {
  position: absolute;
  left: 103px;
  top: 138px;
  width: 972px;
  height: 282px;
  box-sizing: border-box;
  border: 2px solid #217346;
}
.handle {
  position: absolute;
  right: -4px;
  bottom: -4px;
  width: 6px;
  height: 6px;
  background: #217346;
  border: 1px solid #fff;
}
.vscroll {
  width: 32px;
  padding: 1px 6px 1px 1.5px;
  box-sizing: border-box;
  display: flex;
  flex-direction: column;
}
.sbtn {
  height: 25px;
  flex: none;
  background: #fff;
  border: 1px solid #ababab;
  box-sizing: border-box;
  display: flex;
  align-items: center;
  justify-content: center;
}
.sbtn svg {
  width: 12px;
  height: 7px;
}
.sthumb {
  height: 350px;
  flex: none;
  background: #fff;
  border: 1px solid #ababab;
  border-width: 0 1px;
}
.strack {
  flex: 1;
  background: #d9d9d9;
}

/* sheet tabs */
.sheetbar {
  height: 34px;
  box-sizing: border-box;
  background: #e6e6e6;
  border-bottom: 1px solid #c6c6c6;
  display: flex;
  align-items: flex-start;
}
.nav {
  width: 115px;
  display: flex;
  gap: 27px;
  padding: 10px 0 0 28px;
  box-sizing: border-box;
}
.nav svg {
  width: 7px;
  height: 12px;
}
.stab {
  width: 93px;
  height: 30px;
  box-sizing: border-box;
  margin-top: -1px;
  background: #fff;
  border: 1px solid #a6a6a6;
  border-top: 0;
  border-bottom: 3px solid #217346;
  text-align: center;
  line-height: 27px;
  color: #217346;
}
.add {
  width: 22px;
  height: 22px;
  margin: 6px 0 0 39px;
}
.hd {
  margin: 9px 0 0 877px;
  height: 14px;
}
.hscroll {
  margin: 3px 0 0 17px;
  height: 25px;
  width: 726px;
  flex: none;
  display: flex;
}
.hbtn {
  width: 25px;
  background: #fff;
  border: 1px solid #ababab;
  box-sizing: border-box;
  display: flex;
  align-items: center;
  justify-content: center;
}
.hbtn svg {
  width: 7px;
  height: 12px;
}
.hthumb {
  width: 503px;
  background: #fff;
  border-bottom: 1px solid #ababab;
  border-top: 1px solid #ababab;
}
.htrack {
  flex: 1;
  background: #d9d9d9;
}

/* status bar */
.status {
  flex: 1;
  background: #f1f1f1;
  border-bottom: 1px solid #2a3a34;
  display: flex;
  align-items: stretch;
}
.ready {
  line-height: 32px;
  padding-left: 11px;
  width: 1466px;
  box-sizing: border-box;
}
.viewbtn {
  width: 59px;
  display: flex;
  align-items: center;
  justify-content: center;
}
.viewbtn svg {
  width: 19px;
  height: 19px;
}
.viewbtn.on {
  background: #c6c6c6;
}
.viewbtn + .viewbtn {
  margin-left: 1px;
}
.zm {
  position: relative;
  width: 11px;
  align-self: center;
  height: 1.500px;
  background: #555;
}
.minus {
  margin-left: 8px;
}
.plus {
  margin-left: 8px;
}
.plus::after {
  content: "";
  position: absolute;
  left: 4.750px;
  top: -4.750px;
  width: 1.500px;
  height: 11px;
  background: #555;
}
.slider {
  position: relative;
  width: 147px;
  height: 2px;
  margin-left: 9px;
  align-self: center;
  background: #a6a6a6;
}
.tick {
  position: absolute;
  left: 73px;
  top: -4px;
  width: 2px;
  height: 10px;
  background: #a6a6a6;
}
.knob {
  position: absolute;
  left: 107px;
  top: -8px;
  width: 8px;
  height: 17px;
  background: #6a6a6a;
}
.pctz {
  margin-left: 19px;
  line-height: 32px;
  font-family: "Liberation Sans", sans-serif;
  font-size: 19px;
  color: #444;
}

/* dropdown menu */
.menu {
  position: absolute;
  left: 286px;
  top: 193px;
  width: 252px;
  height: 774px;
  box-sizing: border-box;
  padding-top: 1px;
  background: #fff;
  border: 1px solid #c6c6c6;
  box-shadow: 1px 2px 5px rgba(0, 0, 0, 0.3);
  color: #666;
}
.mhead {
  height: 37px;
  line-height: 36px;
  padding-left: 11px;
  background: #e9e9e9;
  font-weight: bold;
  font-size: 17.5px;
}
.mhead.gap {
  margin-bottom: 3px;
}
.msep {
  height: 1px;
  margin: 0 0 2px 48px;
  background: #e1e1e1;
}
.msep.last {
  margin-top: 1px;
}
.mitem {
  height: 36px;
  display: flex;
  align-items: center;
  padding-left: 6px;
  line-height: 36px;
}
.mitem.hover {
  background: #c4c4c4;
  color: #333;
}
.mico {
  width: 24px;
  height: 21px;
  display: block;
  flex: none;
}
.dotted {
  fill: none;
  stroke: #999;
  stroke-dasharray: 1 1;
}
.line {
  fill: none;
  stroke: #777;
}
.thick {
  stroke-width: 2;
}
.mtext {
  margin: -2px 0 0 17px;
  white-space: nowrap;
}
.mtext u {
  text-underline-offset: 2px;
}
.marrow {
  position: absolute;
  right: 14px;
  width: 6px;
  height: 11px;
}

/* annotation */
.redbox {
  position: absolute;
  left: 221px;
  top: 359px;
  width: 389px;
  height: 153px;
  box-sizing: border-box;
  border: 7px solid #ff3b3b;
}

/* watermark */
.wm {
  position: absolute;
  left: 1470px;
  top: 815px;
  width: 350px;
  height: 170px;
  pointer-events: none;
  font-family: "Liberation Sans", sans-serif;
  color: rgba(255, 255, 255, 0.55);
  -webkit-text-stroke: 1px rgba(150, 150, 150, 0.55);
}
.wm span {
  position: absolute;
  white-space: nowrap;
}
.wm-bai {
  left: 4px;
  top: 34px;
  font-size: 76px;
  line-height: 88px;
  font-weight: bold;
}
.wm-paw {
  position: absolute;
  left: 121px;
  top: 2px;
  width: 100px;
  height: 110px;
}
.wm-du {
  left: 144px;
  top: 59px;
  font-size: 46px;
  line-height: 50px;
}
.wm-cn {
  left: 224px;
  top: 46px;
  font-family: "Noto Sans CJK SC", sans-serif;
  font-weight: bold;
  font-size: 58px;
  line-height: 66px;
}
.wm-url {
  left: 2px;
  top: 118px;
  font-size: 45px;
  line-height: 50px;
}
</style>
